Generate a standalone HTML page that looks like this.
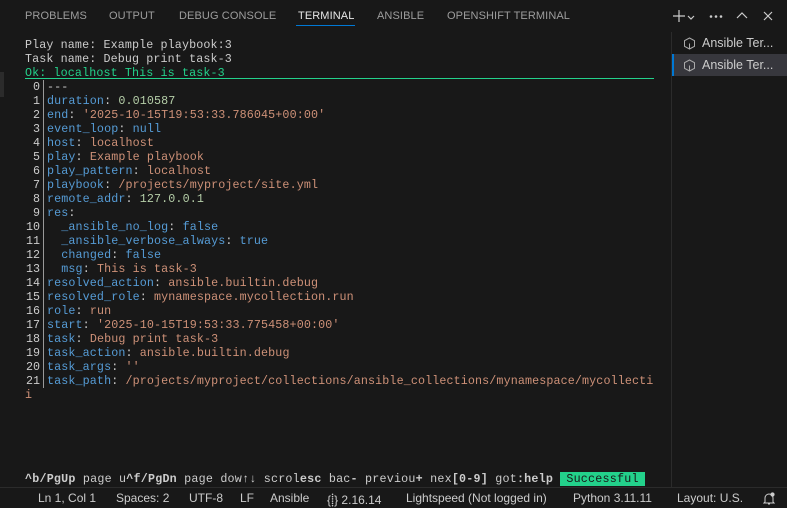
<!DOCTYPE html>
<html><head><style>
*{margin:0;padding:0;box-sizing:border-box}
body{width:787px;height:508px;background:#181818;overflow:hidden;position:relative;font-family:"Liberation Sans",sans-serif;color:#ccc}
.tabs{position:absolute;top:0;left:0;height:34px;width:787px}
.tab{position:absolute;top:10px;font-size:11px;color:#9d9d9d;letter-spacing:0.1px}
.tab.act{color:#e7e7e7}
.uline{position:absolute;left:296px;top:25px;width:59px;height:1px;background:#0078d4}
.term{position:absolute;left:25px;top:38px;font-family:"Liberation Mono",monospace;font-size:11.7px;letter-spacing:0.12px;line-height:14px;white-space:pre;color:#cccccc}
.k{color:#569cd6}.s{color:#ce9178}.n{color:#b5cea8}.b{color:#569cd6}.g{color:#23d18b}
.ln{display:inline-block;width:15px;text-align:right;color:#cccccc;letter-spacing:0}
.bar{display:inline-block;width:1px;height:14px;background:#999;vertical-align:top;margin:0 3px 0 3px}
.okline{position:absolute;left:25px;top:78px;width:629px;height:1px;background:#23d18b}
.side{position:absolute;left:671px;top:32px;width:1px;height:455px;background:#2b2b2b}
.st{position:absolute;left:672px;width:115px;height:22px;font-size:12.5px;color:#ccc;padding-left:30px;line-height:22px}
.st.sel{background:#37373d;border-left:2px solid #0078d4;padding-left:28px}
.ic{position:absolute;left:11px;top:5px}
.status{position:absolute;left:0;top:487px;width:787px;height:21px;border-top:1px solid #2b2b2b;background:#181818;font-size:12px;color:#ccc}
.status span{position:absolute;top:3px}
.help{position:absolute;left:25px;top:472px;font-family:"Liberation Mono",monospace;font-size:11.7px;letter-spacing:0.22px;line-height:14px;white-space:pre;color:#ccc}
.succ{background:#23d18b;color:#181818;padding:0 6px}
</style></head><body>
<div style="position:absolute;left:0;top:72px;width:4px;height:25px;background:#2b2b2b"></div>
<div class="tabs">
<span class="tab" style="left:25px">PROBLEMS</span>
<span class="tab" style="left:109px">OUTPUT</span>
<span class="tab" style="left:179px">DEBUG CONSOLE</span>
<span class="tab act" style="left:298px">TERMINAL</span>
<span class="tab" style="left:377px">ANSIBLE</span>
<span class="tab" style="left:447px">OPENSHIFT TERMINAL</span>
<div class="uline"></div>
<svg style="position:absolute;left:672px;top:8px" width="110" height="16" viewBox="0 0 110 16" fill="none" stroke="#ccc" stroke-width="1.2">
<path d="M7 2v12M1 8h12"/><path d="M16 8l3 3 3-3"/>
<circle cx="39" cy="8.5" r=".7" fill="#ccc"/><circle cx="44" cy="8.5" r=".7" fill="#ccc"/><circle cx="49" cy="8.5" r=".7" fill="#ccc"/>
<path d="M65 10l5-5 5 5"/><path d="M92 4l8 8M100 4l-8 8"/>
</svg>
</div>
<div class="side"></div>
<div class="st" style="top:32px"><svg class="ic" width="13" height="13" viewBox="0 0 13 13" fill="none" stroke="#aaa"><path d="M6.5 1l5 2.7v5.6l-5 2.7-5-2.7V3.7z"/><path d="M6.5 6.5v5" /></svg>Ansible Ter...</div>
<div class="st sel" style="top:54px"><svg class="ic" style="left:9px" width="13" height="13" viewBox="0 0 13 13" fill="none" stroke="#aaa"><path d="M6.5 1l5 2.7v5.6l-5 2.7-5-2.7V3.7z"/><path d="M6.5 6.5v5"/></svg>Ansible Ter...</div>
<div class="term">Play name: Example playbook:3
Task name: Debug print task-3
<span class="g">Ok: localhost This is task-3</span>
<span class="ln"> 0</span><span class="bar"></span>---
<span class="ln"> 1</span><span class="bar"></span><span class="k">duration</span>: <span class="n">0.010587</span>
<span class="ln"> 2</span><span class="bar"></span><span class="k">end</span>: <span class="s">'2025-10-15T19:53:33.786045+00:00'</span>
<span class="ln"> 3</span><span class="bar"></span><span class="k">event_loop</span>: <span class="b">null</span>
<span class="ln"> 4</span><span class="bar"></span><span class="k">host</span>: <span class="s">localhost</span>
<span class="ln"> 5</span><span class="bar"></span><span class="k">play</span>: <span class="s">Example playbook</span>
<span class="ln"> 6</span><span class="bar"></span><span class="k">play_pattern</span>: <span class="s">localhost</span>
<span class="ln"> 7</span><span class="bar"></span><span class="k">playbook</span>: <span class="s">/projects/myproject/site.yml</span>
<span class="ln"> 8</span><span class="bar"></span><span class="k">remote_addr</span>: <span class="n">127.0.0.1</span>
<span class="ln"> 9</span><span class="bar"></span><span class="k">res</span>:
<span class="ln">10</span><span class="bar"></span>  <span class="k">_ansible_no_log</span>: <span class="b">false</span>
<span class="ln">11</span><span class="bar"></span>  <span class="k">_ansible_verbose_always</span>: <span class="b">true</span>
<span class="ln">12</span><span class="bar"></span>  <span class="k">changed</span>: <span class="b">false</span>
<span class="ln">13</span><span class="bar"></span>  <span class="k">msg</span>: <span class="s">This is task-3</span>
<span class="ln">14</span><span class="bar"></span><span class="k">resolved_action</span>: <span class="s">ansible.builtin.debug</span>
<span class="ln">15</span><span class="bar"></span><span class="k">resolved_role</span>: <span class="s">mynamespace.mycollection.run</span>
<span class="ln">16</span><span class="bar"></span><span class="k">role</span>: <span class="s">run</span>
<span class="ln">17</span><span class="bar"></span><span class="k">start</span>: <span class="s">'2025-10-15T19:53:33.775458+00:00'</span>
<span class="ln">18</span><span class="bar"></span><span class="k">task</span>: <span class="s">Debug print task-3</span>
<span class="ln">19</span><span class="bar"></span><span class="k">task_action</span>: <span class="s">ansible.builtin.debug</span>
<span class="ln">20</span><span class="bar"></span><span class="k">task_args</span>: <span class="s">''</span>
<span class="ln">21</span><span class="bar"></span><span class="k">task_path</span>: <span class="s">/projects/myproject/collections/ansible_collections/mynamespace/mycollecti</span>
<span class="s">i</span></div>
<div class="okline"></div>
<div class="help"><b>^b/PgUp</b> page u<b>^f/PgDn</b> page dow<b>↑↓</b> scrol<b>esc</b> bac<b>-</b> previou<b>+</b> nex<b>[0-9]</b> got<b>:help</b> <span class="succ">Successful</span></div>
<div class="status">
<span style="left:38px">Ln 1, Col 1</span>
<span style="left:116px">Spaces: 2</span>
<span style="left:189px">UTF-8</span>
<span style="left:240px">LF</span>
<span style="left:270px">Ansible</span>
<span style="left:327px">{&#x2e3d;} 2.16.14</span>
<span style="left:406px">Lightspeed (Not logged in)</span>
<span style="left:573px">Python 3.11.11</span>
<span style="left:677px">Layout: U.S.</span>
<svg style="position:absolute;left:763px;top:4px" width="12" height="13" viewBox="0 0 12 13" fill="none" stroke="#ccc"><path d="M2 10V6a4 4 0 0 1 8 0v4l1 1H1z"/><path d="M5 12h2"/><circle cx="9.5" cy="2.5" r="1.6" fill="#ccc"/></svg>
</div>
</body></html>
